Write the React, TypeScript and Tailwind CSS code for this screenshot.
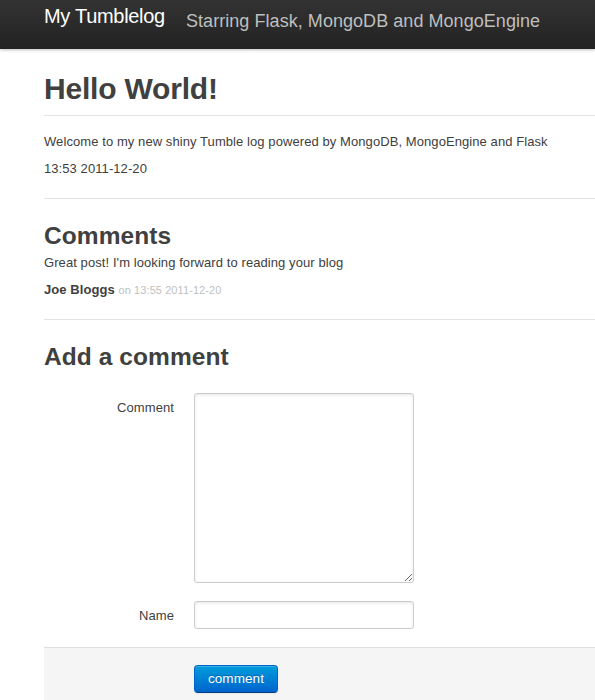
import React from "react";

export default function App() {
  return (
    <div
      className="min-h-[700px] bg-white text-[#404040] text-[13px] leading-[18px]"
      style={{ fontFamily: '"Liberation Sans", Arial, Helvetica, sans-serif' }}
    >
      <div className="h-[49px] bg-gradient-to-b from-[#333333] to-[#222222] shadow-[0_1px_3px_rgba(0,0,0,0.25)] flex items-start pl-[44px]">
        <div className="w-[142px] pt-[6px] text-[20px] leading-[20px] text-white tracking-[-0.3px]">
          My Tumblelog
        </div>
        <div className="pt-[12px] text-[18px] leading-[18px] text-[#bfbfbf] tracking-[0.05px]">
          Starring Flask, MongoDB and MongoEngine
        </div>
      </div>

      <div className="pl-[44px] tracking-[0.08px]">
        <div className="mt-[22px] pb-[8px] border-b border-[#e2e2e2] mb-[17px]">
          <h1 className="text-[30px] leading-[36px] font-bold tracking-[-0.2px]">Hello World!</h1>
        </div>
        <p className="mb-[9px]">
          Welcome to my new shiny Tumble log powered by MongoDB, MongoEngine and Flask
        </p>
        <p>13:53 2011-12-20</p>

        <hr className="mt-[20px] mb-[19px] border-0 border-t border-[#e2e2e2]" />

        <h2 className="text-[24.5px] leading-[36px] font-bold">Comments</h2>
        <p className="mb-[9px]">Great post! I'm looking forward to reading your blog</p>
        <p>
          <strong className="font-bold">Joe Bloggs</strong>{" "}
          <span className="text-[11px] text-[#bfbfbf]">on 13:55 2011-12-20</span>
        </p>

        <hr className="mt-[20px] mb-[19px] border-0 border-t border-[#e2e2e2]" />

        <h2 className="text-[24.5px] leading-[36px] font-bold mb-[18px]">Add a comment</h2>

        <form onSubmit={(e) => e.preventDefault()}>
          <div className="flex mb-[18px]">
            <label className="w-[130px] pt-[6px] text-right leading-[18px]">Comment</label>
            <div className="ml-[20px]">
              <textarea className="block w-[220px] h-[190px] border border-[#cccccc] rounded-[3px] px-[4px] py-[4px] text-[13px] shadow-[inset_0_1px_3px_rgba(0,0,0,0.1)] outline-none" />
            </div>
          </div>
          <div className="flex">
            <label className="w-[130px] pt-[6px] text-right leading-[18px]">Name</label>
            <div className="ml-[20px]">
              <input
                type="text"
                className="block w-[220px] h-[28px] border border-[#cccccc] rounded-[3px] px-[4px] text-[13px] shadow-[inset_0_1px_3px_rgba(0,0,0,0.1)] outline-none"
              />
            </div>
          </div>
          <div className="mt-[18px] bg-[#f5f5f5] border-t border-[#dddddd] pt-[17px] pb-[18px] pl-[150px]">
            <button
              type="submit"
              className="h-[28px] w-[84px] rounded-[4px] border border-[#0064cd] border-b-[#003f81] bg-gradient-to-b from-[#049cdb] to-[#0064cd] text-white text-[13.5px] leading-[16px] [text-shadow:0_-1px_0_rgba(0,0,0,0.25)] shadow-[inset_0_1px_0_rgba(255,255,255,0.2),0_1px_2px_rgba(0,0,0,0.05)]"
            >
              comment
            </button>
          </div>
        </form>
      </div>
    </div>
  );
}
